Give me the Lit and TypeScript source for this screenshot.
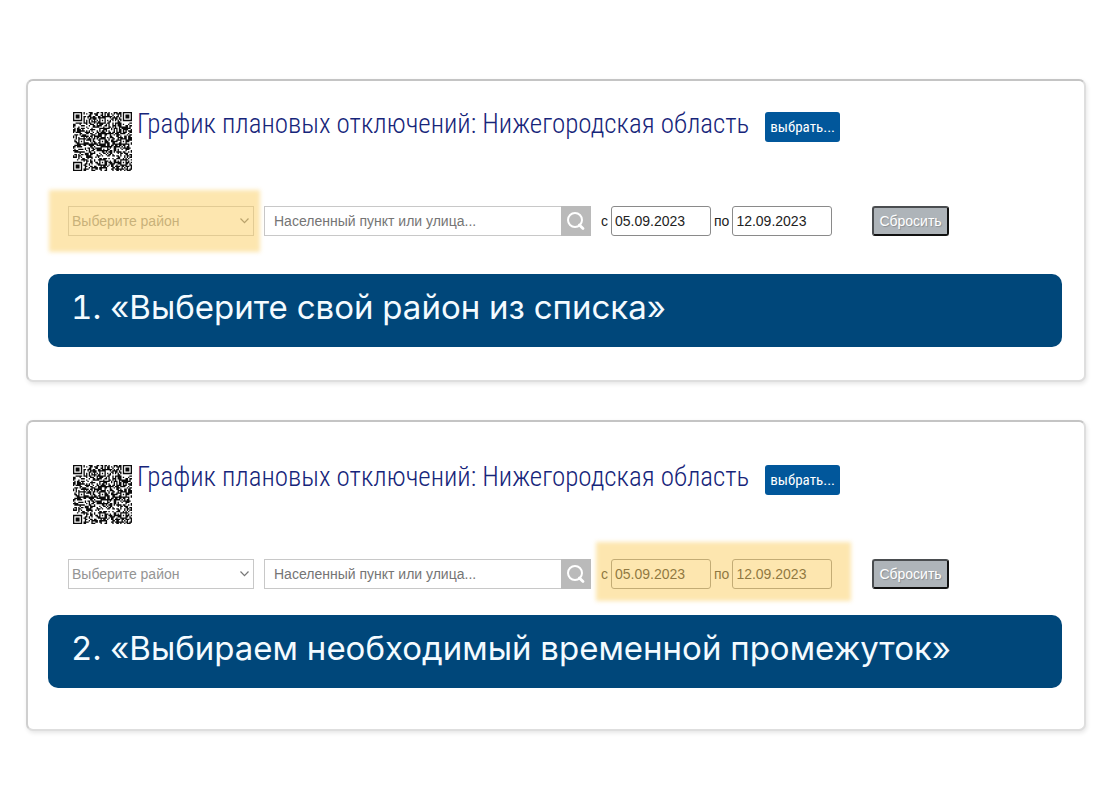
import { LitElement, html, css, svg } from "lit";
import { customElement, property } from "lit/decorators.js";

const QR_SIZE = 45;

/** Builds the path of a 45-module code: finders, alignment marks, timing lines and data. */
function buildQrPath(): string {
  const n = QR_SIZE;
  const grid: boolean[][] = [];
  let seed = 20230905;
  for (let y = 0; y < n; y++) {
    grid.push([]);
    for (let x = 0; x < n; x++) {
      seed = (Math.imul(seed, 1664525) + 1013904223) >>> 0;
      grid[y].push(((seed >>> 16) & 255) < 138);
    }
  }
  for (let i = 0; i < n; i++) {
    grid[6][i] = i % 2 === 0;
    grid[i][6] = i % 2 === 0;
  }
  const rings = (cx: number, cy: number, r: number, dark: (d: number) => boolean) => {
    for (let dy = -r; dy <= r; dy++) {
      for (let dx = -r; dx <= r; dx++) {
        const x = cx + dx;
        const y = cy + dy;
        if (x < 0 || y < 0 || x >= n || y >= n) continue;
        grid[y][x] = dark(Math.max(Math.abs(dx), Math.abs(dy)));
      }
    }
  };
  for (const [x, y] of [[22, 6], [6, 22], [22, 22], [38, 22], [22, 38], [38, 38]]) {
    rings(x, y, 2, (d) => d !== 1);
  }
  for (const [x, y] of [[3, 3], [n - 4, 3], [3, n - 4]]) {
    rings(x, y, 4, (d) => d !== 2 && d !== 4);
  }
  let d = "";
  grid.forEach((row, y) => {
    row.forEach((on, x) => {
      if (on) d += `M${x} ${y}h1v1h-1z`;
    });
  });
  return d;
}

const QR_PATH = buildQrPath();

@customElement("qr-code")
export class QrCode extends LitElement {
  static styles = css`
    :host {
      display: block;
      flex: none;
      width: 59px;
      height: 59px;
    }
    .code {
      display: block;
      width: 100%;
      height: 100%;
    }
  `;

  render() {
    return html`<svg class="code" viewBox="0 0 45 45" aria-hidden="true">
      ${svg`<path d=${QR_PATH} fill="#0a0a0a"></path>`}
    </svg>`;
  }
}

@customElement("schedule-step")
export class ScheduleStep extends LitElement {
  @property() highlight: "district" | "dates" = "district";
  @property() caption = "";

  static styles = css`
    :host {
      display: block;
    }
    * {
      box-sizing: border-box;
    }
    .card {
      display: flex;
      flex-direction: column;
      padding: 31px 22px 33px 20px;
      border: 2px solid #dedede;
      border-top-color: #c4c4c4;
      border-left-color: #cfcfcf;
      border-radius: 7px;
      background: #fff;
      box-shadow: 1px 2px 4px rgba(0, 0, 0, 0.1);
      font-family: "Liberation Sans", Arial, sans-serif;
      font-size: 14px;
      line-height: 20px;
      color: #222;
    }
    .card.mark-dates {
      padding-top: 43px;
      padding-bottom: 41px;
    }
    .head {
      display: flex;
      align-items: flex-start;
      padding-left: 25px;
    }
    .title {
      margin: 0 16px 0 5px;
      font-family: "Roboto Condensed", "Arial Narrow", sans-serif;
      font-size: 27px;
      line-height: 24px;
      font-weight: 300;
      color: #16257a;
    }
    .choose {
      flex: none;
      height: 30px;
      padding: 0 5px;
      border: 0;
      border-radius: 3px;
      background: #01579b;
      color: #fff;
      font-family: "Roboto Condensed", "Arial Narrow", sans-serif;
      font-size: 15px;
      line-height: 28px;
    }
    .filters {
      display: flex;
      align-items: center;
      margin: 35px 0 38px;
      padding-left: 20px;
    }
    .mark-dates .filters {
      margin-bottom: 26px;
    }
    .district {
      position: relative;
      flex: none;
      width: 186px;
      margin-right: 10px;
    }
    .select {
      display: block;
      appearance: none;
      width: 100%;
      height: 30px;
      padding: 0 20px 0 3px;
      border: 1px solid #c8c8c8;
      border-radius: 0;
      background: #fff;
      color: #949494;
      font: inherit;
    }
    .chevron {
      position: absolute;
      top: 11px;
      right: 4px;
      width: 11px;
      height: 8px;
      pointer-events: none;
    }
    .search {
      display: flex;
      flex: 0 1 327px;
      min-width: 0;
      margin-right: 10px;
    }
    .query {
      flex: 1;
      min-width: 0;
      height: 30px;
      padding: 0 9px;
      border: 1px solid #c8c8c8;
      border-right: 0;
      border-radius: 0;
      background: #fff;
      color: #222;
      font: inherit;
    }
    .query::placeholder {
      color: #757575;
    }
    .find {
      display: flex;
      align-items: center;
      justify-content: center;
      width: 30px;
      height: 30px;
      padding: 0;
      border: 0;
      background: #bababa;
    }
    .glass {
      width: 20px;
      height: 20px;
    }
    .period {
      position: relative;
      display: flex;
      align-items: center;
      gap: 3px;
      margin-right: 40px;
    }
    .date {
      width: 100px;
      height: 30px;
      padding: 0 3px;
      border: 1px solid #8a8a8a;
      border-radius: 3px;
      background: #fff;
      color: #222;
      font: inherit;
    }
    .reset {
      height: 30px;
      padding: 0 5px;
      border: 2px solid #111;
      border-top-color: #4a4d50;
      border-left-color: #4a4d50;
      border-radius: 3px;
      background: #aeb4b9;
      color: #fff;
      font: inherit;
      line-height: 24px;
      text-shadow: 1px 1px 1px rgba(0, 0, 0, 0.2);
    }
    .marker {
      position: absolute;
      background: rgba(252, 205, 95, 0.5);
      filter: blur(2px);
      pointer-events: none;
    }
    .district .marker {
      inset: -16px -6px -16px -19px;
    }
    .period .marker {
      inset: -17px -19px -12px -5px;
    }
    .caption {
      margin: 0;
      padding: 13px 23px 20px;
      border-radius: 10px;
      background: #00477a;
      color: #f4fbff;
      font-family: Inter, sans-serif;
      font-size: 33px;
      line-height: 40px;
      font-weight: 400;
      font-variant-numeric: tabular-nums;
    }
  `;

  render() {
    const marker = html`<div class="marker"></div>`;
    return html`
      <section class="card mark-${this.highlight}">
        <header class="head">
          <qr-code></qr-code>
          <h2 class="title">График плановых отключений: Нижегородская область</h2>
          <button class="choose" type="button">выбрать...</button>
        </header>
        <form class="filters" @submit=${(e: Event) => e.preventDefault()}>
          <div class="district">
            <select class="select" aria-label="Район">
              <option>Выберите район</option>
            </select>
            <svg class="chevron" viewBox="0 0 11 8" aria-hidden="true">
              <path d="M1.5 1.5 5.5 5.7 9.5 1.5" fill="none" stroke="#777" stroke-width="1.2"></path>
            </svg>
            ${this.highlight === "district" ? marker : null}
          </div>
          <div class="search">
            <input class="query" type="text" aria-label="Поиск" placeholder="Населенный пункт или улица..." />
            <button class="find" type="button" aria-label="Найти">
              <svg class="glass" viewBox="0 0 20 20" aria-hidden="true">
                <circle cx="9" cy="9" r="7" fill="none" stroke="#fff" stroke-width="2"></circle>
                <path d="M13.4 14 17 17.6" stroke="#fff" stroke-width="2.8" stroke-linecap="round"></path>
              </svg>
            </button>
          </div>
          <div class="period">
            <label for="from">с</label>
            <input class="date" id="from" type="text" value="05.09.2023" />
            <label for="to">по</label>
            <input class="date" id="to" type="text" value="12.09.2023" />
            ${this.highlight === "dates" ? marker : null}
          </div>
          <button class="reset" type="reset">Сбросить</button>
        </form>
        <p class="caption">${this.caption}</p>
      </section>
    `;
  }
}

@customElement("app-root")
export class AppRoot extends LitElement {
  static styles = css`
    :host {
      display: block;
      background: #fff;
    }
    .page {
      display: flex;
      flex-direction: column;
      gap: 38px;
      padding: 79px 26px 54px;
    }
  `;

  render() {
    return html`
      <main class="page">
        <schedule-step highlight="district" caption="1. «Выберите свой район из списка»"></schedule-step>
        <schedule-step highlight="dates" caption="2. «Выбираем необходимый временной промежуток»"></schedule-step>
      </main>
    `;
  }
}
